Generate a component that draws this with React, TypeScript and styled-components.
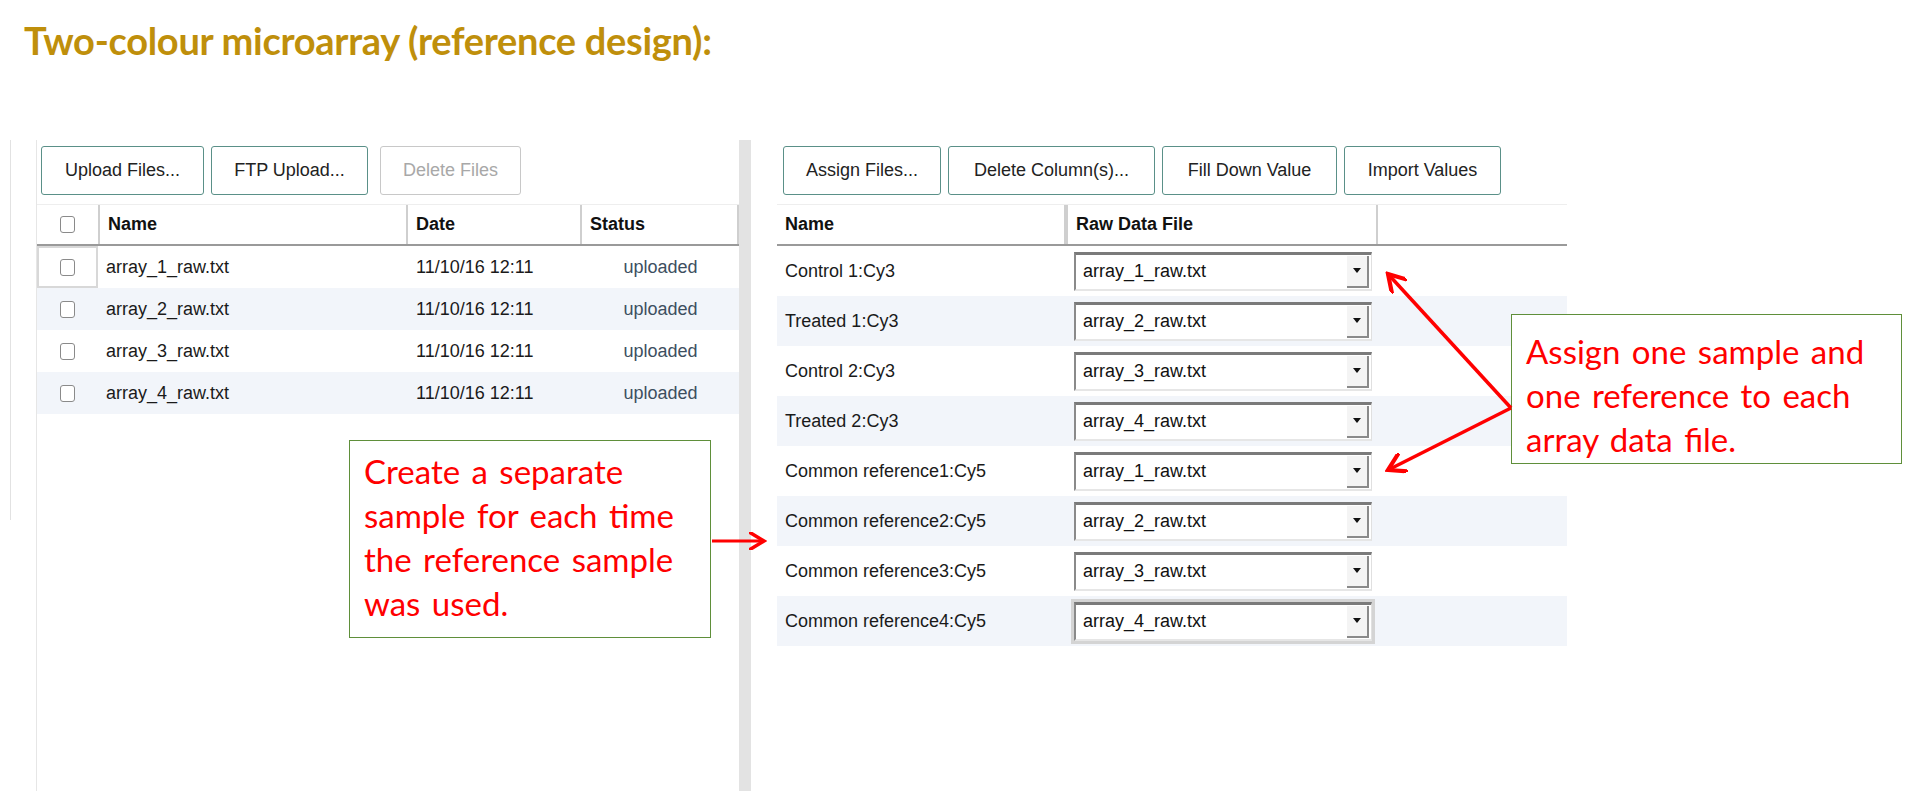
import React from "react";
import styled, { createGlobalStyle } from "styled-components";

const Global = createGlobalStyle`
  html, body { margin: 0; padding: 0; background: #fff; }
  body { font-family: "Liberation Sans", Arial, sans-serif; overflow: hidden; }
`;

const Page = styled.div`
  position: relative;
  width: 1906px;
  height: 791px;
  overflow: hidden;
`;

const Title = styled.h1`
  margin: 0;
  padding: 16px 0 0 24px;
  height: 118px;
  box-sizing: border-box;
  font-family: Lato, "Open Sans", sans-serif;
  font-weight: 700;
  font-size: 38px;
  line-height: 48px;
  color: #bf8f0b;
  letter-spacing: -0.3px;
`;

const Workspace = styled.div`
  display: flex;
  height: 673px;
  padding-top: 22px;
  box-sizing: border-box;
`;

const EdgeLine = styled.div`
  width: 10px;
  height: 380px;
  border-right: 1px solid #e2e2e2;
  flex: none;
`;

const LeftPanel = styled.div`
  margin-left: 25px;
  width: 702px;
  border-left: 1px solid #e6e6e6;
  padding-top: 6px;
  flex: none;
`;

const Splitter = styled.div`
  width: 12px;
  background: #e3e3e3;
  flex: none;
`;

const RightPanel = styled.div`
  padding-left: 26px;
  padding-top: 6px;
  width: 790px;
  flex: none;
`;

const Toolbar = styled.div<{ $indent: number }>`
  display: flex;
  gap: 7px;
  padding-left: ${(p) => p.$indent}px;
  height: 49px;
  margin-bottom: 9px;
`;

const Button = styled.button<{ $w: number; $disabled?: boolean }>`
  width: ${(p) => p.$w}px;
  height: 49px;
  background: #fff;
  border: 1.5px solid ${(p) => (p.$disabled ? "#c8c8c8" : "#5a9088")};
  border-radius: 3px;
  font-family: "Liberation Sans", Arial, sans-serif;
  font-size: 18px;
  color: ${(p) => (p.$disabled ? "#a8a8a8" : "#222")};
  padding: 0;
`;

const HeadRow = styled.div<{ $cols: string }>`
  display: grid;
  grid-template-columns: ${(p) => p.$cols};
  height: 39px;
  border-bottom: 2px solid #9a9a9a;
  border-top: 1px solid #eee;
`;

const HeadCell = styled.div<{ $noDivider?: boolean }>`
  display: flex;
  align-items: center;
  padding-left: 8px;
  font-weight: 700;
  font-size: 18px;
  color: #111;
  border-right: ${(p) => (p.$noDivider ? "none" : "2px solid #cfcfcf")};
`;

const Row = styled.div<{ $cols: string; $h: number; $alt: boolean }>`
  display: grid;
  grid-template-columns: ${(p) => p.$cols};
  height: ${(p) => p.$h}px;
  background: ${(p) => (p.$alt ? "#f2f5fa" : "#fff")};
`;

const Cell = styled.div<{ $center?: boolean; $color?: string; $pad?: number }>`
  display: flex;
  align-items: center;
  justify-content: ${(p) => (p.$center ? "center" : "flex-start")};
  padding-left: ${(p) => p.$pad ?? 8}px;
  font-size: 18px;
  color: ${(p) => p.$color ?? "#1a1a1a"};
`;

const CheckCell = styled.div<{ $focus?: boolean }>`
  display: flex;
  align-items: center;
  justify-content: center;
  border: ${(p) => (p.$focus ? "2px solid #d8d8d8" : "2px solid transparent")};
`;

const Check = styled.span`
  width: 13px;
  height: 15px;
  border: 1.5px solid #8a8a8a;
  border-radius: 3px;
  background: #fff;
`;

const SelectBox = styled.div<{ $focus?: boolean }>`
  width: 298px;
  height: 39px;
  box-sizing: border-box;
  display: flex;
  border-top: 3px solid #7a7a7a;
  border-left: 2px solid #8a8a8a;
  border-right: 1px solid #e0e0e0;
  border-bottom: 2px solid #e6e6e6;
  background: #fff;
  outline: ${(p) => (p.$focus ? "3px solid #d4d4d4" : "none")};
`;

const SelectText = styled.div`
  flex: 1;
  display: flex;
  align-items: center;
  padding-left: 7px;
  font-size: 18px;
  color: #111;
`;

const SelectArrow = styled.div`
  width: 20px;
  margin: 1px 2px 1px 0;
  background: #f4f4f4;
  border-right: 2px solid #8a8a8a;
  border-bottom: 2px solid #8a8a8a;
  display: flex;
  align-items: center;
  justify-content: center;
  &::after {
    content: "";
    border-left: 4px solid transparent;
    border-right: 4px solid transparent;
    border-top: 5px solid #111;
  }
`;

const Callout = styled.div<{ $x: number; $y: number; $w: number; $h: number }>`
  position: absolute;
  left: ${(p) => p.$x}px;
  top: ${(p) => p.$y}px;
  width: ${(p) => p.$w}px;
  height: ${(p) => p.$h}px;
  box-sizing: border-box;
  border: 1.5px solid #5f8f3a;
  background: #fff;
  padding: ${(p) => (p.$x > 1000 ? "14px 0 0 14px" : "8px 0 0 14px")};
  font-family: Lato, "Open Sans", sans-serif;
  font-size: 33px;
  line-height: 44px;
  color: #ff0000;
  word-spacing: 3px;
`;

const Overlay = styled.svg`
  position: absolute;
  left: 0;
  top: 0;
  pointer-events: none;
`;

const leftCols = "61px 310px 174px 157px";
const rightCols = "289px 312px 189px";

const files = ["array_1_raw.txt", "array_2_raw.txt", "array_3_raw.txt", "array_4_raw.txt"];
const samples = [
  ["Control 1:Cy3", 0],
  ["Treated 1:Cy3", 1],
  ["Control 2:Cy3", 2],
  ["Treated 2:Cy3", 3],
  ["Common reference1:Cy5", 0],
  ["Common reference2:Cy5", 1],
  ["Common reference3:Cy5", 2],
  ["Common reference4:Cy5", 3],
] as const;

export default function App() {
  return (
    <Page>
      <Global />
      <Title>Two-colour microarray (reference design):</Title>
      <Workspace>
        <EdgeLine />
        <LeftPanel>
          <Toolbar $indent={4}>
            <Button $w={163}>Upload Files...</Button>
            <Button $w={157}>FTP Upload...</Button>
            <Button $w={141} $disabled style={{ marginLeft: 5 }}>Delete Files</Button>
          </Toolbar>
          <HeadRow $cols={leftCols}>
            <CheckCell><Check /></CheckCell>
            <HeadCell style={{ borderLeft: "2px solid #cfcfcf" }}>Name</HeadCell>
            <HeadCell>Date</HeadCell>
            <HeadCell>Status</HeadCell>
          </HeadRow>
          {files.map((f, i) => (
            <Row key={f} $cols={leftCols} $h={42} $alt={i % 2 === 1}>
              <CheckCell $focus={i === 0}><Check /></CheckCell>
              <Cell>{f}</Cell>
              <Cell>11/10/16 12:11</Cell>
              <Cell $center $color="#3d4f5f" $pad={0}>uploaded</Cell>
            </Row>
          ))}
        </LeftPanel>
        <Splitter />
        <RightPanel>
          <Toolbar $indent={6}>
            <Button $w={158}>Assign Files...</Button>
            <Button $w={207}>Delete Column(s)...</Button>
            <Button $w={175}>Fill Down Value</Button>
            <Button $w={157}>Import Values</Button>
          </Toolbar>
          <HeadRow $cols={rightCols}>
            <HeadCell>Name</HeadCell>
            <HeadCell style={{ borderLeft: "2px solid #cfcfcf" }}>Raw Data File</HeadCell>
            <HeadCell $noDivider />
          </HeadRow>
          {samples.map(([name, fi], i) => (
            <Row key={name} $cols={rightCols} $h={50} $alt={i % 2 === 1}>
              <Cell>{name}</Cell>
              <Cell>
                <SelectBox $focus={i === 7}>
                  <SelectText>{files[fi]}</SelectText>
                  <SelectArrow />
                </SelectBox>
              </Cell>
              <Cell />
            </Row>
          ))}
        </RightPanel>
      </Workspace>

      <Callout $x={349} $y={440} $w={362} $h={198}>
        Create a separate sample for each time the reference sample was used.
      </Callout>
      <Callout $x={1511} $y={314} $w={391} $h={150}>
        Assign one sample and one reference to each array data file.
      </Callout>

      <Overlay width={1906} height={791} viewBox="0 0 1906 791">
        <defs>
          <marker id="ah" markerWidth="6" markerHeight="6" refX="5" refY="3" orient="auto" markerUnits="strokeWidth">
            <path d="M0,0 L5,3 L0,6" fill="none" stroke="#ff0000" strokeWidth="1.2" />
          </marker>
        </defs>
        <line x1={712} y1={541} x2={764} y2={541} stroke="#ff0000" strokeWidth={3} markerEnd="url(#ah)" />
        <line x1={1511} y1={408} x2={1388} y2={274} stroke="#ff0000" strokeWidth={3.5} markerEnd="url(#ah)" />
        <line x1={1511} y1={408} x2={1388} y2={470} stroke="#ff0000" strokeWidth={3.5} markerEnd="url(#ah)" />
      </Overlay>
    </Page>
  );
}
